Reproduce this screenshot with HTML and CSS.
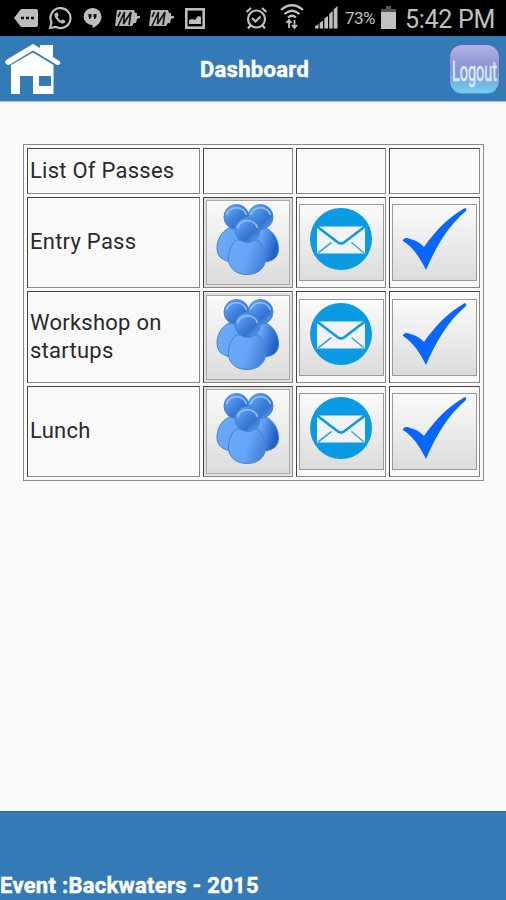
FILE: index.html
```html
<!DOCTYPE html>
<html lang="en">
<head>
  <meta charset="UTF-8" />
  <meta name="viewport" content="width=device-width, initial-scale=1" />
  <title>Dashboard</title>
  <link rel="stylesheet" href="styles.css">
</head>
<body>

  <!-- Shared icons -->
  <svg class="defs" width="0" height="0">
    <defs>
      <linearGradient id="head" x1="0" y1="0" x2="1" y2="1">
        <stop offset="0.2" stop-color="#5d9dec" />
        <stop offset="0.45" stop-color="#4385de" />
        <stop offset="0.65" stop-color="#3474d0" />
        <stop offset="1" stop-color="#66a6f5" />
      </linearGradient>
      <linearGradient id="body" x1="0" y1="0" x2="1" y2="0.3">
        <stop offset="0" stop-color="#6aabfa" />
        <stop offset="0.6" stop-color="#66a5f6" />
        <stop offset="1" stop-color="#4585df" />
      </linearGradient>
      <linearGradient id="body-dark" x1="0" y1="0" x2="1" y2="0.3">
        <stop offset="0.5" stop-color="#64a4f5" />
        <stop offset="1" stop-color="#225fc4" />
      </linearGradient>
    </defs>
    <symbol id="people" viewBox="0 0 64 72">
      <g stroke="#4582d6" stroke-width="1">
        <path d="M13 24C5 28 1 36 1 44C1 53 7 57 16 58L36 50L34 24Z" fill="url(#body)" />
        <path d="M50 24C58 28 62.500 36 62.500 45C62.500 54 56 58 46 58L30 50L30 24Z" fill="url(#body-dark)" />
        <circle cx="20.500" cy="13" r="12.500" fill="url(#head)" />
        <circle cx="44.500" cy="13" r="12.500" fill="url(#head)" />
      </g>
      <path d="M10.500 11A10.500 10.500 0 0 1 30.500 11M34.500 11A10.500 10.500 0 0 1 54.500 11" fill="none" stroke="#8fc2fa" stroke-width="1.600" />
      <g stroke="#4582d6" stroke-width="1">
        <path d="M20 36C15 41 12.500 47 12.500 55C12.500 63 19 70.500 31 70.500C43 70.500 49.500 63 49.500 55C49.500 47 47 41 42 36Z" fill="url(#body)" />
        <circle cx="31.500" cy="26" r="12.500" fill="url(#head)" />
      </g>
      <path d="M21.500 24A10.500 10.500 0 0 1 41.500 24" fill="none" stroke="#8fc2fa" stroke-width="1.600" />
    </symbol>
    <symbol id="mail" viewBox="0 0 62 62">
      <circle cx="31" cy="31" r="31" fill="#0a9be2" />
      <rect x="7" y="18.500" width="48" height="27" fill="#f1f2f3" />
      <path d="M7 18.500L28 34.500Q31 36.500 34 34.500L55 18.500" fill="none" stroke="#0a9be2" stroke-width="2.600" />
      <path d="M8 45L21.500 34.500M54 45L41.500 34.500" fill="none" stroke="#3fa9df" stroke-width="1.600" />
    </symbol>
    <symbol id="check" viewBox="0 0 64 62">
      <path d="M0 32C2 29 5 30 7 31C12 32 16 34 21 39C33 22 46 9 61 .5C63 0 64 1 63 3C44 19 33 39 23 62C17 50 10 39 0 33Z" fill="#0866fa" />
    </symbol>
    <symbol id="train" viewBox="0 0 26 22">
      <path d="M2 3L19 3L20 6L22 6L22 9L25 9L25 11L22 12L21 16L19 16L17 19L0 19Z" fill="#b5b5b5" />
      <path d="M3 19L9.500 5L8.500 17L16 5L14 18M5.500 5L3 10" fill="none" stroke="#161616" stroke-width="1.700" />
    </symbol>
  </svg>

  <div class="status-bar">
    <div class="notifications">
      <svg class="messages" width="25" height="20" viewBox="0 0 25 20">
        <path d="M7 1H22Q24 1 24 3V17Q24 19 22 19H7L0 10Z" fill="#bdbdbd" />
        <path d="M7 10h3M12 10h3M17 10h3" stroke="#111" stroke-width="2.500" />
      </svg>
      <svg class="whatsapp" width="24" height="24" viewBox="0 0 24 24">
        <path d="M2 22L3.500 16.500A10 10 0 1 1 8 21Z" fill="none" stroke="#bdbdbd" stroke-width="2.200" />
        <path d="M8 6.500Q5.500 7.500 7 11Q9.500 16 14 17.500Q17 18 17.500 15L14.500 13.200L13 14.800Q10.500 13.500 9.500 11L10.500 9.500L9.500 6.500Z" fill="#bdbdbd" />
      </svg>
      <svg class="hangouts" width="19" height="22" viewBox="0 0 19 22">
        <path d="M9.500 1A8.700 8.700 0 0 1 18.500 10C18.500 15 14 19 9.500 21V18A8.700 8.700 0 0 1 .5 10A8.700 8.700 0 0 1 9.500 1Z" fill="#bdbdbd" />
        <path d="M5.500 7H8.500V10L7 12H6V10H5.500ZM10.500 7H13.500V10L12 12H11V10H10.500Z" fill="#111" />
      </svg>
      <svg class="train" width="26" height="22"><use href="#train" /></svg>
      <svg class="train" width="26" height="22"><use href="#train" /></svg>
      <svg class="picture" width="20" height="21" viewBox="0 0 20 21">
        <rect x="1.300" y="1.300" width="17.400" height="18.400" fill="none" stroke="#bdbdbd" stroke-width="2.600" />
        <path d="M4 16V12L7 11L10 12L13 8L16 9V16Z" fill="#bdbdbd" />
      </svg>
    </div>
    <div class="system">
      <svg class="alarm" width="23" height="24" viewBox="0 0 23 24">
        <g fill="none" stroke="#c0c0c0" stroke-width="2.200">
          <circle cx="11.500" cy="13" r="8.500" />
          <path d="M1.500 6L6 2M17 2L21.500 6M7 12L10.500 15.500L15.500 10.500M5.500 19.500L3 22.500M17.500 19.500L20 22.500" />
        </g>
      </svg>
      <svg class="wifi" width="24" height="26" viewBox="0 0 24 26">
        <path d="M1 6Q12 -3.500 23 6M4.500 10Q12 3.500 19.500 10M8 13.500Q12 10 16 13.500" fill="none" stroke="#c0c0c0" stroke-width="2.300" />
        <path d="M9 24V17M6.500 19L9 16L11.500 19M14.500 16V23M12 21L14.500 24L17 21" fill="none" stroke="#c0c0c0" stroke-width="1.800" />
      </svg>
      <svg class="signal" width="23" height="23" viewBox="0 0 23 23">
        <path d="M0 22.500V20.500L3.500 18V22.500ZM4.700 22.500V17L8 14.500V22.500ZM9.300 22.500V12.500L13 10V22.500ZM14.200 22.500V8L17.700 5V22.500ZM18.700 22.500V3.500L22.500 0V22.500Z" fill="#c0c0c0" />
      </svg>
      <span class="battery-level">73%</span>
      <svg class="battery" width="15" height="23" viewBox="0 0 15 23">
        <path d="M5 0H10V3H15V6H0V3H5Z" fill="#555" />
        <path d="M0 6H15V23H0Z" fill="#c0c0c0" />
      </svg>
      <span class="clock">5:42 PM</span>
    </div>
  </div>

  <header class="header">
    <a class="home" href="#" aria-label="Home">
      <svg width="56" height="52" viewBox="0 0 56 52">
        <path d="M28 1L35 5V2H48V14L55 18.500Q56 20 54 22L52 22L28 7.500L4 22Q1 22 0 19L1 17Z" fill="#fff" />
        <path d="M28 9.500L48.500 22V51H28V33H15V51H6V22Z" fill="#fff" />
        <path d="M34 33H46V43H34Z" fill="#337ab7" />
      </svg>
    </a>
    <h1>Dashboard</h1>
    <a class="logout" href="#">
      <svg width="51" height="50" viewBox="0 0 51 50">
        <text x="3" y="37" textLength="45" lengthAdjust="spacingAndGlyphs">Logout</text>
      </svg>
    </a>
  </header>

  <main>
    <table class="passes">
      <colgroup>
        <col class="col-name">
        <col class="col-people">
        <col class="col-mail">
        <col class="col-check">
      </colgroup>
      <tr class="heading">
        <td>List Of Passes</td>
        <td></td>
        <td></td>
        <td></td>
      </tr>
      <tr>
        <td>Entry Pass</td>
        <td class="action"><button class="tall"><svg width="64" height="72"><use href="#people" /></svg></button></td>
        <td class="action"><button><svg width="62" height="62"><use href="#mail" /></svg></button></td>
        <td class="action"><button><svg width="64" height="62"><use href="#check" /></svg></button></td>
      </tr>
      <tr class="middle">
        <td>Workshop on startups</td>
        <td class="action"><button class="tall"><svg width="64" height="72"><use href="#people" /></svg></button></td>
        <td class="action"><button><svg width="62" height="62"><use href="#mail" /></svg></button></td>
        <td class="action"><button><svg width="64" height="62"><use href="#check" /></svg></button></td>
      </tr>
      <tr>
        <td>Lunch</td>
        <td class="action"><button class="tall"><svg width="64" height="72"><use href="#people" /></svg></button></td>
        <td class="action"><button><svg width="62" height="62"><use href="#mail" /></svg></button></td>
        <td class="action"><button><svg width="64" height="62"><use href="#check" /></svg></button></td>
      </tr>
    </table>
  </main>

  <footer class="footer">Event :Backwaters - 2015</footer>

</body>
</html>
```
FILE: styles.css
```css
* {
  box-sizing: border-box;
}
body {
  margin: 0;
  height: 900px;
  display: flex;
  flex-direction: column;
  overflow: hidden;
  font-family: Roboto, Arial, sans-serif;
  color: #2a2a2a;
  background-color: #f9f9f9;
}
svg {
  display: block;
  flex: none;
}
.defs {
  position: absolute;
}

/* Status bar */
.status-bar {
  display: flex;
  justify-content: space-between;
  height: 36px;
  flex: none;
  padding: 0 11px 0 14px;
  background-color: #000;
  color: #c0c0c0;
}
.notifications,
.system {
  display: flex;
  align-items: center;
}
.whatsapp {
  margin-left: 9px;
}
.hangouts {
  margin-left: 11px;
}
.train {
  margin-left: 13px;
}
.train + .train {
  margin-left: 8px;
}
.picture {
  margin-left: 10px;
}
.wifi {
  margin-left: 12px;
  margin-top: -2px;
}
.signal {
  margin-left: 11px;
  margin-top: -1px;
}
.battery-level {
  width: 36px;
  padding-left: 7px;
  font-size: 17px;
  letter-spacing: -0.6px;
  white-space: nowrap;
}
.battery {
  margin-left: 7px;
  margin-top: -1px;
}
.clock {
  width: 90px;
  margin-left: 9px;
  padding-top: 2px;
  font-size: 25px;
  letter-spacing: -0.3px;
  white-space: nowrap;
}

/* Header */
.header {
  display: flex;
  align-items: center;
  justify-content: space-between;
  flex: none;
  height: 66px;
  padding: 0 6px 0 5px;
  background-color: #337ab7;
  border-bottom: 1px solid #a9c3d9;
}
.home {
  width: 56px;
}
.header h1 {
  margin: 2px 0 0;
  padding-right: 1px;
  font-size: 22px;
  line-height: 26px;
  letter-spacing: 0.3px;
  color: #fff;
  -webkit-text-stroke: 0.4px #fff;
}
.logout {
  width: 51px;
  height: 50px;
  border: 1px solid #4f68bd;
  border-bottom-color: #4b9fce;
  border-radius: 13px;
  background: linear-gradient(#b4b4e2, #8f97d3 40%, #779fd6 62%, #70d0ef);
}
.logout svg {
  margin: -1px;
}
.logout text {
  font-size: 28px;
  fill: #e4e9fa;
  stroke: #e4e9fa;
  stroke-width: 0.5px;
}

/* Passes table */
main {
  flex: 1;
  padding: 42px 0 0 23px;
}
.passes {
  width: 461px;
  table-layout: fixed;
  border: 1px solid #888;
  border-spacing: 3px;
  font-size: 22px;
  line-height: 28px;
  letter-spacing: 0.25px;
}
.col-name {
  width: 173px;
}
.col-people,
.col-mail {
  width: 90px;
}
.passes td {
  height: 91px;
  padding: 0 2px 1px;
  border: 1px solid #888;
  border-top-color: #444;
  border-left-color: #444;
}
.passes .heading td {
  height: 46px;
}
.passes .middle td {
  height: 92px;
}
.passes .action {
  padding: 0;
}
.action button {
  display: flex;
  justify-content: center;
  align-items: flex-start;
  width: 85px;
  height: 77px;
  margin: 0 auto;
  padding: 3px 0 0;
  border: 1px solid #999;
  background: linear-gradient(#fafafa, #dcdcdc);
}
.action .tall {
  width: 84px;
  height: 85px;
  padding-top: 3px;
  border-color: #aaa;
  box-shadow: 0 0 0 2px #dedede;
}

/* Footer */
.footer {
  flex: none;
  height: 89px;
  padding-top: 60px;
  background-color: #337ab7;
  border-top: 1px solid #2a6ba3;
  color: #fff;
  font-size: 22px;
  font-weight: bold;
  line-height: 28px;
  letter-spacing: 0.28px;
  -webkit-text-stroke: 0.4px #fff;
}
```
